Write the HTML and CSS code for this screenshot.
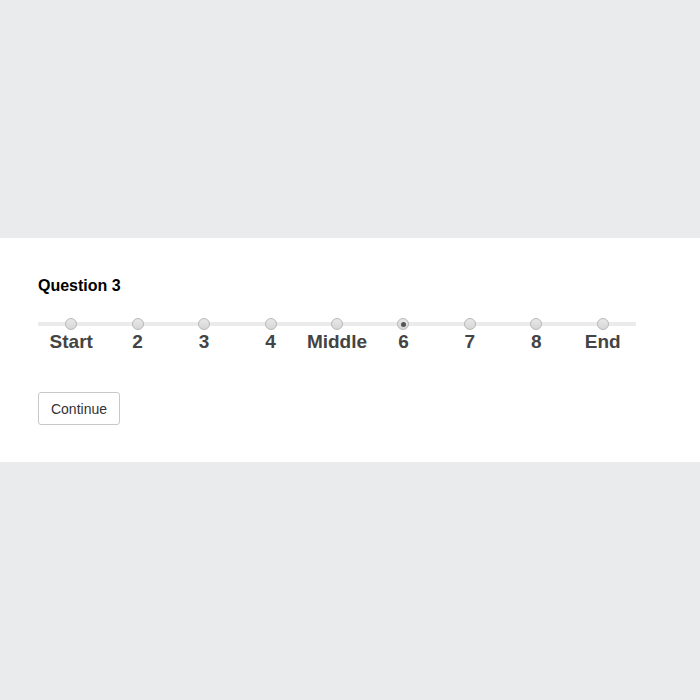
FILE: index.html
```html
<!DOCTYPE html>
<html>
<head>
<meta charset="utf-8">
<link rel="stylesheet" href="styles.css">
</head>
<body>
<div class="page">
  <div class="panel">
    <div class="question">Question 3</div>
    <div class="scale">
      <div class="track"></div>
      <div class="opts">
        <div class="opt"><span class="dot"></span><span class="lbl">Start</span></div>
        <div class="opt"><span class="dot"></span><span class="lbl">2</span></div>
        <div class="opt"><span class="dot"></span><span class="lbl">3</span></div>
        <div class="opt"><span class="dot"></span><span class="lbl">4</span></div>
        <div class="opt"><span class="dot"></span><span class="lbl">Middle</span></div>
        <div class="opt"><span class="dot sel"></span><span class="lbl">6</span></div>
        <div class="opt"><span class="dot"></span><span class="lbl">7</span></div>
        <div class="opt"><span class="dot"></span><span class="lbl">8</span></div>
        <div class="opt"><span class="dot"></span><span class="lbl">End</span></div>
      </div>
    </div>
    <button class="btn">Continue</button>
  </div>
</div>
</body>
</html>
```
FILE: styles.css
```css
html, body { margin: 0; padding: 0; }
body {
  background: #eaebed;
  font-family: "Liberation Sans", Arial, sans-serif;
  width: 700px;
  height: 700px;
}
.page {
  padding-top: 238px;
}
.panel {
  background: #fff;
  height: 224px;
  box-sizing: border-box;
  padding: 38px 38px 0 38px;
}
.question {
  font-size: 16px;
  font-weight: bold;
  color: #000;
  line-height: 18px;
  margin-top: 1px;
}
.scale {
  position: relative;
  width: 598px;
  margin-top: 23px;
}
.track {
  position: absolute;
  left: 0;
  right: 0;
  top: 4px;
  height: 4px;
  background: #ebebeb;
}
.opts {
  position: relative;
  display: grid;
  grid-template-columns: repeat(9, 1fr);
}
.opt {
  display: flex;
  flex-direction: column;
  align-items: center;
}
.dot {
  width: 10px;
  height: 10px;
  border-radius: 50%;
  border: 1px solid #b8b8b8;
  background: linear-gradient(#e8e8e8, #d6d6d6);
  box-sizing: content-box;
  display: flex;
  align-items: center;
  justify-content: center;
}
.dot.sel::after {
  content: "";
  width: 5px;
  height: 5px;
  border-radius: 50%;
  background: #555;
}
.lbl {
  font-size: 19px;
  font-weight: bold;
  color: #444;
  line-height: 22px;
  margin-top: 1px;
}
.btn {
  margin-top: 39px;
  font-family: "Liberation Sans", Arial, sans-serif;
  font-size: 14px;
  color: #333;
  background: #fff;
  border: 1px solid #c8c8c8;
  border-radius: 3px;
  width: 82px;
  height: 33px;
  padding: 0;
}
```
